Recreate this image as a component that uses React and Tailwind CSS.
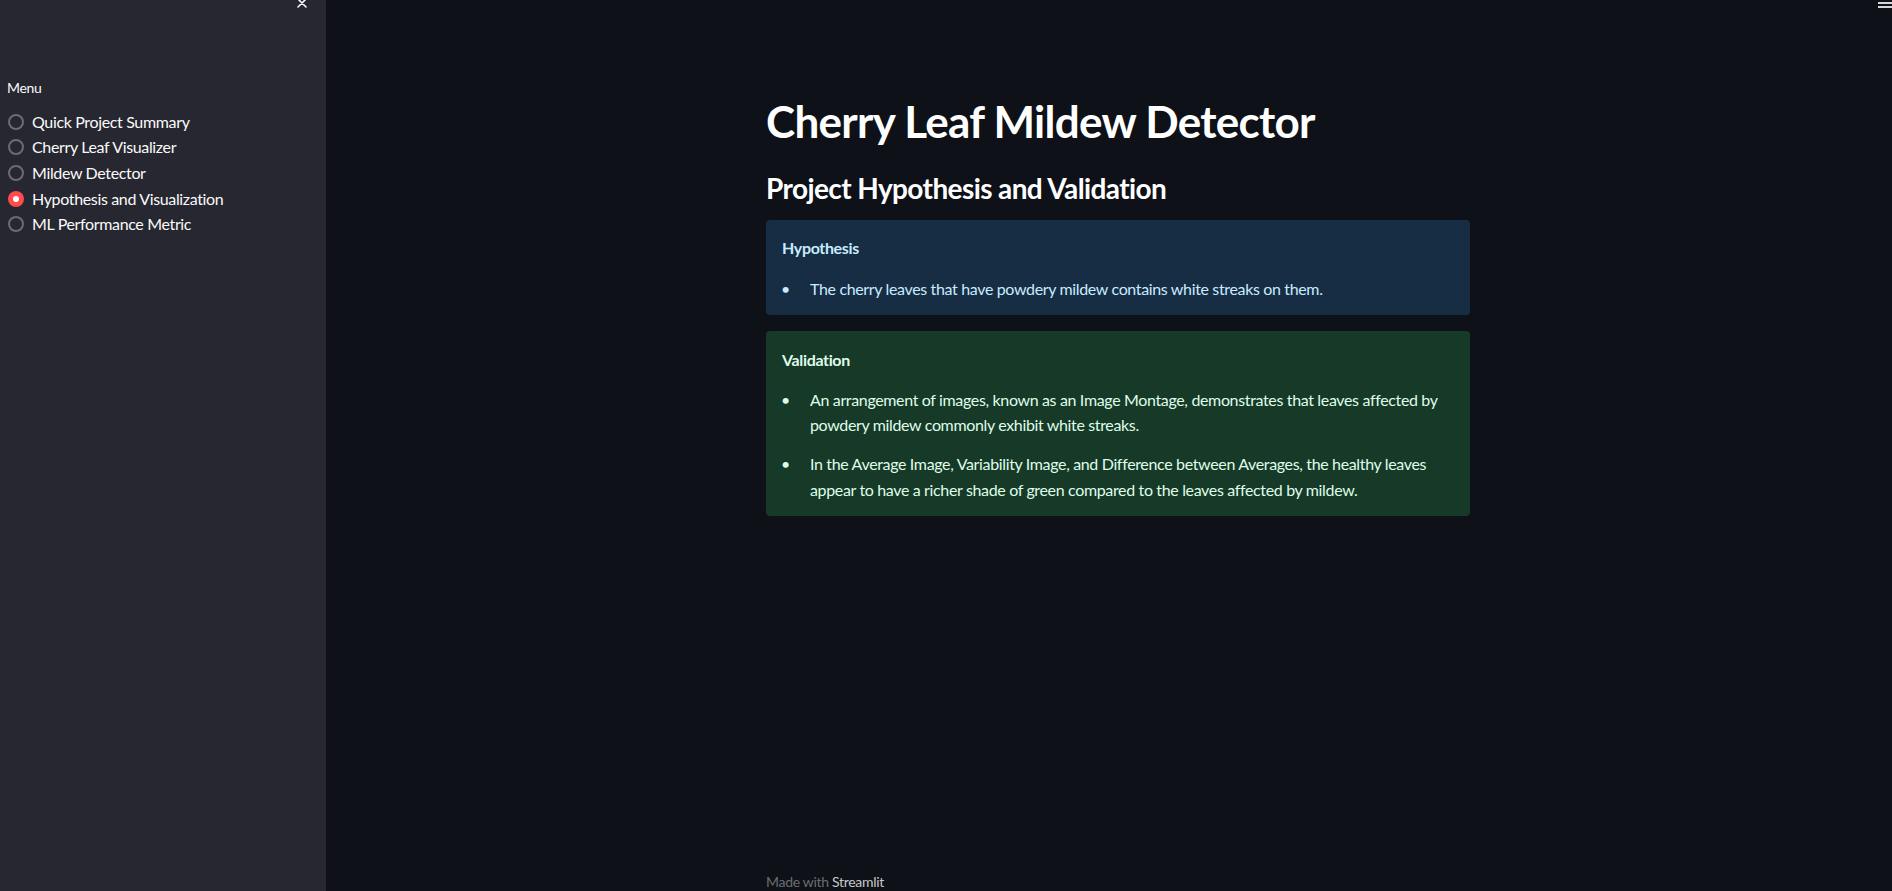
import React from "react";

const pages = [
  "Quick Project Summary",
  "Cherry Leaf Visualizer",
  "Mildew Detector",
  "Hypothesis and Visualization",
  "ML Performance Metric",
];

const Radio = ({ label, active }) => (
  <div className="flex items-center h-[25.6px]">
    {active ? (
      <span className="w-4 h-4 rounded-full bg-[#ff4b4b] flex items-center justify-center">
        <span className="w-[6px] h-[6px] rounded-full bg-white"></span>
      </span>
    ) : (
      <span className="w-4 h-4 rounded-full border-2 border-[#6b6c72]"></span>
    )}
    <span className="ml-2 text-[16px] tracking-[-0.35px] text-[#fafafa]">{label}</span>
  </div>
);

const Bullet = ({ children }) => (
  <li className="flex">
    <span className="w-[29px] shrink-0 -ml-[1px]">•</span>
    <span>{children}</span>
  </li>
);

export default function App() {
  return (
    <div
      className="flex h-[891px] overflow-hidden bg-[#0e1117] text-[#fafafa]"
      style={{ fontFamily: "Lato, 'Noto Sans', sans-serif" }}
    >
      {/* sidebar */}
      <aside className="relative w-[326px] shrink-0 bg-[#262730] pl-[8px] pt-[78px]">
        <svg
          className="absolute right-[19px] top-[-2px]"
          width="10"
          height="10"
          viewBox="0 0 10 10"
          stroke="#fafafa"
          strokeWidth="1.6"
          strokeLinecap="round"
        >
          <path d="M1 1 L9 9 M9 1 L1 9" />
        </svg>
        <div className="text-[14px] leading-5 ml-[-1px] tracking-[-0.3px]">Menu</div>
        <div className="mt-[11px] flex flex-col">
          {pages.map((p, i) => (
            <Radio key={i} label={p} active={i === 3} />
          ))}
        </div>
      </aside>

      {/* main */}
      <main className="relative flex-1 flex flex-col">
        <div className="absolute right-0 top-[2px] w-[14px] h-[2px] bg-[#d6d6d8]"></div>
        <div className="absolute right-0 top-[6px] w-[14px] h-[2px] bg-[#d6d6d8]"></div>

        <div className="ml-[440px] w-[704px] pt-[95px]">
          <h1 className="text-[44px] font-bold leading-[53px] tracking-[-0.7px] text-white">
            Cherry Leaf Mildew Detector
          </h1>
          <h2 className="mt-[23px] text-[28px] font-bold leading-[34px] tracking-[-0.6px] text-white">
            Project Hypothesis and Validation
          </h2>

          <div className="mt-[15px] rounded-[4px] bg-[#172d43] px-4 pt-[15px] pb-[14px] text-[#c7ebff] text-[16px] leading-[25.6px] tracking-[-0.35px]">
            <p className="font-bold">Hypothesis</p>
            <ul className="mt-[15px]">
              <Bullet>The cherry leaves that have powdery mildew contains white streaks on them.</Bullet>
            </ul>
          </div>

          <div className="mt-[16px] rounded-[4px] bg-[#173928] px-4 pt-[16px] pb-[14px] text-[#dffde9] text-[16px] leading-[25.6px] tracking-[-0.35px]">
            <p className="font-bold">Validation</p>
            <ul className="mt-[14px] flex flex-col gap-[13px]">
              <Bullet>
                An arrangement of images, known as an Image Montage, demonstrates that leaves affected by
                powdery mildew commonly exhibit white streaks.
              </Bullet>
              <Bullet>
                In the Average Image, Variability Image, and Difference between Averages, the healthy leaves
                appear to have a richer shade of green compared to the leaves affected by mildew.
              </Bullet>
            </ul>
          </div>
        </div>

        <div className="flex-1"></div>
        <div className="ml-[440px] mb-[-1px] text-[14px] leading-5 tracking-[-0.3px] text-[#fafafa]/40">
          Made with <span className="text-[#c8c8ca]">Streamlit</span>
        </div>
      </main>
    </div>
  );
}
